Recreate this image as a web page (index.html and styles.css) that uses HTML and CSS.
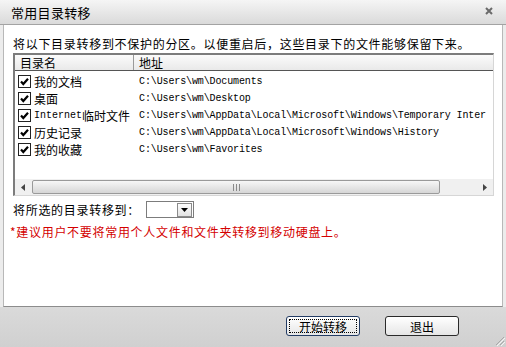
FILE: index.html
```html
<!DOCTYPE html>
<html lang="zh-CN">
    <head>
        <meta charset="UTF-8">
        <title>常用目录转移</title>
        <link rel="stylesheet" href="styles.css">
    </head>
    <body>
        <div class="win">
            <div class="titlebar">
                <span class="title">常用目录转移</span>
                <svg class="close" width="8" height="8" viewBox="0 0 8 8"><path d="M1 1L7 7M7 1L1 7" stroke="#6a6a6a" stroke-width="2"/></svg>
            </div>
            <div class="main">
                <p class="desc">将以下目录转移到不保护的分区。以便重启后，这些目录下的文件能够保留下来。</p>
                <div class="list">
                    <div class="list-head">
                        <div class="col1">目录名</div>
                        <div class="col2">地址</div>
                    </div>
                    <div class="rows">
                        <div class="row">
                            <div class="name"><svg class="chk" width="13" height="13" viewBox="0 0 13 13"><rect x="0.5" y="0.5" width="12" height="12" fill="#fff" stroke="#222"/><path d="M3 6.5L5.3 9L10 3.8" fill="none" stroke="#000" stroke-width="2.2"/></svg>我的文档</div>
                            <div class="path">C:\Users\wm\Documents</div>
                        </div>
                        <div class="row">
                            <div class="name"><svg class="chk" width="13" height="13" viewBox="0 0 13 13"><rect x="0.5" y="0.5" width="12" height="12" fill="#fff" stroke="#222"/><path d="M3 6.5L5.3 9L10 3.8" fill="none" stroke="#000" stroke-width="2.2"/></svg>桌面</div>
                            <div class="path">C:\Users\wm\Desktop</div>
                        </div>
                        <div class="row">
                            <div class="name"><svg class="chk" width="13" height="13" viewBox="0 0 13 13"><rect x="0.5" y="0.5" width="12" height="12" fill="#fff" stroke="#222"/><path d="M3 6.5L5.3 9L10 3.8" fill="none" stroke="#000" stroke-width="2.2"/></svg><span class="en">Internet</span>临时文件</div>
                            <div class="path">C:\Users\wm\AppData\Local\Microsoft\Windows\Temporary Inter</div>
                        </div>
                        <div class="row">
                            <div class="name"><svg class="chk" width="13" height="13" viewBox="0 0 13 13"><rect x="0.5" y="0.5" width="12" height="12" fill="#fff" stroke="#222"/><path d="M3 6.5L5.3 9L10 3.8" fill="none" stroke="#000" stroke-width="2.2"/></svg>历史记录</div>
                            <div class="path">C:\Users\wm\AppData\Local\Microsoft\Windows\History</div>
                        </div>
                        <div class="row">
                            <div class="name"><svg class="chk" width="13" height="13" viewBox="0 0 13 13"><rect x="0.5" y="0.5" width="12" height="12" fill="#fff" stroke="#222"/><path d="M3 6.5L5.3 9L10 3.8" fill="none" stroke="#000" stroke-width="2.2"/></svg>我的收藏</div>
                            <div class="path">C:\Users\wm\Favorites</div>
                        </div>
                    </div>
                    <div class="hscroll">
                        <div class="arrow"><svg width="4" height="7" viewBox="0 0 4 7"><path d="M4 0L0 3.5L4 7Z" fill="#444"/></svg></div>
                        <div class="track">
                            <div class="thumb"><svg width="7" height="7" viewBox="0 0 7 7"><path d="M0.5 0V7M3.5 0V7M6.5 0V7" stroke="#8a8a8a"/></svg></div>
                        </div>
                        <div class="arrow"><svg width="4" height="7" viewBox="0 0 4 7"><path d="M0 0L4 3.5L0 7Z" fill="#444"/></svg></div>
                    </div>
                </div>
                <div class="target">
                    <span>将所选的目录转移到：</span>
                    <div class="combo">
                        <div class="combo-btn"><svg width="7" height="4" viewBox="0 0 7 4"><path d="M0 0H7L3.5 4Z" fill="#000"/></svg></div>
                    </div>
                </div>
                <p class="warn">*建议用户不要将常用个人文件和文件夹转移到移动硬盘上。</p>
            </div>
            <div class="footer">
                <button class="btn focus">开始转移</button>
                <button class="btn">退出</button>
            </div>
            <svg class="grip" width="11" height="11" viewBox="0 0 11 11"><path d="M10 2L2 10M10 6L6 10" stroke="#a8a8a8"/><path d="M11 3L3 11M11 7L7 11" stroke="#f4f4f4"/></svg>
        </div>
    </body>
</html>
```

FILE: styles.css
```css
body {
    margin: 0;
    background: #ececec;
    font-family: "Noto Sans CJK SC", sans-serif;
    font-size: 12px;
    color: #000;
}
.win {
    width: 506px;
    height: 347px;
    display: flex;
    flex-direction: column;
    position: relative;
    overflow: hidden;
}
.titlebar {
    height: 24px;
    flex: none;
    border-bottom: 1px solid #a3a3a3;
    background: linear-gradient(#f5f5f5, #dadada);
    display: flex;
    align-items: center;
    justify-content: space-between;
    padding: 0 13px 0 11px;
}
.title {
    font-size: 13px;
    letter-spacing: 0.3px;
}
.close {
    margin-top: -3px;
}
.main {
    flex: 1;
    margin: 0 3px;
    background: #fff;
    border-left: 1px solid #b8b8b8;
    border-right: 1px solid #b8b8b8;
    border-bottom: 1px solid #8c8c8c;
    padding: 0 8px 0 9px;
}
.desc {
    margin: 0 0 1px;
    padding-top: 11px;
    line-height: 16px;
    letter-spacing: 0.7px;
    white-space: nowrap;
}
.list {
    width: 478px;
    height: 140px;
    border-top: 2px solid #7c7c7c;
    border-left: 2px solid #7c7c7c;
    border-right: 1px solid #d6d6d6;
    border-bottom: 1px solid #d6d6d6;
    display: flex;
    flex-direction: column;
    overflow: hidden;
}
.list-head {
    height: 15px;
    flex: none;
    display: flex;
    background: linear-gradient(#fbfbfb, #e9e9e9);
    border-bottom: 1px solid #555;
    line-height: 15px;
}
.col1 {
    width: 113px;
    padding-left: 5px;
    border-right: 1px solid #9a9a9a;
}
.col2 {
    padding-left: 5px;
}
.rows {
    flex: 1;
    padding-top: 2px;
    overflow: hidden;
}
.row {
    height: 17px;
    display: flex;
    align-items: center;
    white-space: nowrap;
}
.name {
    width: 116px;
    flex: none;
    padding-left: 3px;
    display: flex;
    align-items: center;
}
.chk {
    margin-right: 3px;
    flex: none;
}
.en {
    font-family: "Liberation Mono", monospace;
    font-size: 10px;
}
.path {
    padding-left: 5px;
    font-family: "Liberation Mono", monospace;
    font-size: 10px;
    letter-spacing: -0.12px;
}
.hscroll {
    height: 16px;
    flex: none;
    display: flex;
    background: #f0f0f0;
}
.arrow {
    width: 16px;
    display: flex;
    align-items: center;
    justify-content: center;
}
.track {
    flex: 1;
    padding: 1px 37px 1px 1px;
}
.thumb {
    height: 12px;
    border: 1px solid #9a9a9a;
    border-radius: 2px;
    background: linear-gradient(#f7f7f7, #d6d6d6);
    display: flex;
    align-items: center;
    justify-content: center;
}
.target {
    margin-top: 5px;
    height: 17px;
    display: flex;
    align-items: center;
    letter-spacing: 0.7px;
}
.combo {
    margin-left: 6px;
    width: 45px;
    height: 15px;
    border: 1px solid #7c7c7c;
    background: #fff;
    display: flex;
    justify-content: flex-end;
    align-items: center;
    padding-right: 1px;
}
.combo-btn {
    width: 13px;
    height: 12px;
    border: 1px solid #8a8a8a;
    background: linear-gradient(#fdfdfd, #e2e2e2);
    display: flex;
    align-items: center;
    justify-content: center;
}
.warn {
    margin: 6px 0 0 -3px;
    line-height: 16px;
    color: #d40000;
    letter-spacing: 0.7px;
    white-space: nowrap;
}
.footer {
    height: 40px;
    flex: none;
    background: linear-gradient(#dadada, #d0d0d0);
    display: flex;
    justify-content: flex-end;
    align-items: flex-start;
    gap: 25px;
    padding: 9px 47px 0 0;
    box-sizing: border-box;
}
.btn {
    width: 74px;
    height: 20px;
    border: 1px solid #2a2a2a;
    border-radius: 3px;
    background: linear-gradient(#ffffff, #e6e6e6);
    font-family: "Noto Sans CJK SC", sans-serif;
    font-size: 12px;
    padding: 0;
    color: #000;
}
.focus {
    border-color: #233c64;
    outline: 1px dotted #000;
    outline-offset: -4px;
}
.grip {
    position: absolute;
    right: 1px;
    bottom: 1px;
}
```
